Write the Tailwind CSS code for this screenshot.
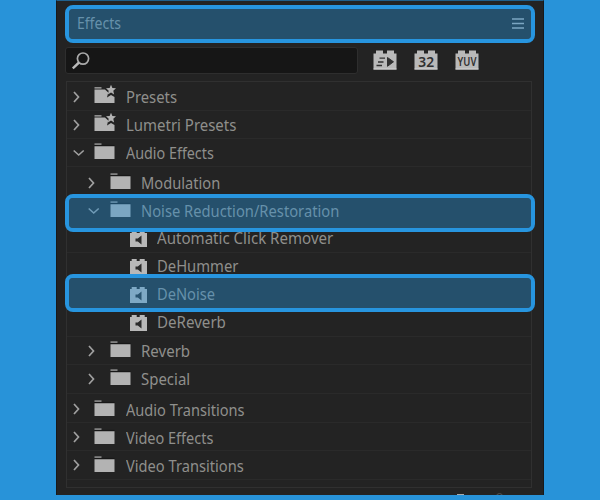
<!DOCTYPE html>
<html lang="en">
<head>
<meta charset="utf-8">
<title>Effects</title>
<script src="https://cdn.jsdelivr.net/npm/@tailwindcss/browser@4"></script>
</head>
<body class="w-[600px] h-[500px] overflow-hidden bg-[#2893d9] font-['Noto_Sans',sans-serif] text-[15.5px] leading-[28px] text-[#8f8f8c]">
<svg class="hidden">
  <symbol id="right" viewBox="0 0 12 28"><path d="M1 9l4.500 5L1 19" fill="none" stroke="#a0a0a0" stroke-width="1.700"/></symbol>
  <symbol id="down" viewBox="0 0 12 28"><path d="M.7 11.500l5 4.500 5-4.500" fill="none" stroke="#a0a0a0" stroke-width="1.600"/></symbol>
  <symbol id="folder" viewBox="0 0 21 28"><path d="M.5 4.600h7v1.200h-7zM.5 7.200h20v12.800h-20z" fill="#b3b3b3"/><path d="M.5 6.400h20" stroke="#171717"/></symbol>
  <symbol id="star" viewBox="0 0 23 28"><path d="M.5 4.300h7v1.200h-7zM.5 6.600h10.500l3.200 2.900-1.200 5 4-2.400 3.500 2V20H.5z" fill="#b3b3b3"/><path d="M17 1.800l1.400 3.200 3.600.3-2.700 2.500.8 3.600-3.100-1.900-3.100 1.900.8-3.600L12 5.300l3.600-.3z" fill="#b3b3b3"/></symbol>
  <symbol id="brick" viewBox="0 0 17 28"><path d="M0 9h1.700V7h5v2h3V7h5v2H17v14H0z" fill="#b8b8b8"/><path d="M5.500 14.400h2.300l3.700-3v9l-3.700-3H5.500z" fill="#2b2b2b"/></symbol>
  <symbol id="block" viewBox="0 0 24 20"><path d="M.5 3.500H3V.5h7v3h4V.5h7v3h2.500v16H.5z" fill="#b9b9b9"/><path d="M.5 19h23" stroke="#d4d4d4"/></symbol>
</svg>
<main class="relative ml-[56px] w-[488px] h-[495px] bg-[#232323] border-t border-t-[#20618d] border-x border-x-[#17191b] overflow-hidden">
  <header class="flex items-center justify-between h-[46px] pl-5 pr-[19px] pb-[2px]">
    <span class="origin-left scale-x-[.88] text-[16px]">Effects</span>
    <svg class="w-[12px] h-[11px] mt-[1px]" viewBox="0 0 12 11"><path d="M0 1h12M0 5.500h12M0 10h12" stroke="#b3b3b3" stroke-width="1.300"/></svg>
  </header>
  <section class="flex items-start ml-2 h-[34px]">
    <div class="w-[293px] h-[27px] rounded-[3px] border border-[#2e2e2e] bg-[#161616]">
      <svg class="w-[22px] h-[25px] ml-1.5" viewBox="0 0 22 25"><circle cx="11" cy="10.600" r="5.600" fill="none" stroke="#aaa" stroke-width="1.700"/><path d="M7 14.500L.8 20.300" stroke="#bbb" stroke-width="2.400"/></svg>
    </div>
    <div class="flex gap-[17px] ml-[15px] mt-[3px]">
      <svg class="w-[24px] h-[20px]" viewBox="0 0 24 20"><use href="#block"/><path d="M14.500 7.500l6 4.300-6 4.500z" fill="#303030" stroke="#303030"/><path d="M6.500 8.200h5.500M5 12h5.500M3.500 15.500H9" stroke="#303030" stroke-width="1.300"/></svg>
      <svg class="w-[24px] h-[20px]" viewBox="0 0 24 20"><use href="#block"/><text x="4.300" y="16.500" font-family="Noto Sans" font-weight="600" font-size="13.500" fill="#303030" textLength="15.800" lengthAdjust="spacingAndGlyphs">32</text></svg>
      <svg class="w-[24px] h-[20px]" viewBox="0 0 24 20"><use href="#block"/><text x="2.600" y="16.300" font-family="Noto Sans" font-weight="600" font-size="12" fill="#303030" textLength="18.800" lengthAdjust="spacingAndGlyphs">YUV</text></svg>
    </div>
  </section>
  <section class="ml-[9px] w-[466px] h-[407px] border border-[#303030] pt-[1px] whitespace-nowrap">
    <div class="flex h-[28px] pl-[6px] border-b border-[#2a2a2a]"><svg class="w-[12px] h-[28px] shrink-0"><use href="#right"/></svg><svg class="w-[23px] h-[28px] shrink-0 ml-[9px] mr-[9px]"><use href="#star"/></svg><span class="origin-left scale-x-[.955]">Presets</span></div>
    <div class="flex h-[28px] pl-[6px] border-b border-[#2a2a2a]"><svg class="w-[12px] h-[28px] shrink-0"><use href="#right"/></svg><svg class="w-[23px] h-[28px] shrink-0 ml-[9px] mr-[9px]"><use href="#star"/></svg><span class="origin-left scale-x-[.965]">Lumetri Presets</span></div>
    <div class="flex h-[28px] pl-[6px] border-b border-[#2a2a2a]"><svg class="w-[12px] h-[28px] shrink-0"><use href="#down"/></svg><svg class="w-[21px] h-[28px] shrink-0 ml-[9px] mr-[11px]"><use href="#folder"/></svg><span class="origin-left scale-x-[.925]">Audio Effects</span></div>
    <div class="flex h-[28px] mt-[2px] pl-[21px]"><svg class="w-[12px] h-[28px] shrink-0"><use href="#right"/></svg><svg class="w-[21px] h-[28px] shrink-0 ml-[10px] mr-[10px]"><use href="#folder"/></svg><span class="origin-left scale-x-[.945]">Modulation</span></div>
    <div class="flex h-[27px] pl-[21px]"><svg class="w-[12px] h-[28px] shrink-0"><use href="#down"/></svg><svg class="w-[21px] h-[28px] shrink-0 ml-[10px] mr-[10px]"><use href="#folder"/></svg><span class="origin-left scale-x-[.95]">Noise Reduction/Restoration</span></div>
    <div class="flex h-[29px] -mb-[1px] pl-[63px] border-b border-[#2a2a2a]"><svg class="w-[17px] h-[28px] shrink-0 mr-[10px]"><use href="#brick"/></svg><span class="origin-left scale-x-[.973]">Automatic Click Remover</span></div>
    <div class="flex h-[28px] pl-[63px]"><svg class="w-[17px] h-[28px] shrink-0 mr-[10px]"><use href="#brick"/></svg><span class="origin-left scale-x-[.955]">DeHummer</span></div>
    <div class="flex h-[28px] pl-[63px]"><svg class="w-[17px] h-[28px] shrink-0 mr-[10px]"><use href="#brick"/></svg><span class="origin-left scale-x-[.945]">DeNoise</span></div>
    <div class="flex h-[29px] pl-[63px] border-b border-[#2a2a2a]"><svg class="w-[17px] h-[28px] shrink-0 mr-[10px]"><use href="#brick"/></svg><span class="origin-left scale-x-[.975]">DeReverb</span></div>
    <div class="flex h-[28px] pl-[21px] border-b border-[#2a2a2a]"><svg class="w-[12px] h-[28px] shrink-0"><use href="#right"/></svg><svg class="w-[21px] h-[28px] shrink-0 ml-[10px] mr-[10px]"><use href="#folder"/></svg><span class="origin-left scale-x-[.97]">Reverb</span></div>
    <div class="flex h-[29px] mb-[1px] pl-[21px] border-b border-[#2a2a2a]"><svg class="w-[12px] h-[28px] shrink-0"><use href="#right"/></svg><svg class="w-[21px] h-[28px] shrink-0 ml-[10px] mr-[10px]"><use href="#folder"/></svg><span class="origin-left scale-x-[.965]">Special</span></div>
    <div class="flex h-[28px] pl-[6px] border-b border-[#2a2a2a]"><svg class="w-[12px] h-[28px] shrink-0"><use href="#right"/></svg><svg class="w-[21px] h-[28px] shrink-0 ml-[9px] mr-[11px] mt-px"><use href="#folder"/></svg><span class="mt-px origin-left scale-x-[.94]">Audio Transitions</span></div>
    <div class="flex h-[28px] pl-[6px] border-b border-[#2a2a2a]"><svg class="w-[12px] h-[28px] shrink-0"><use href="#right"/></svg><svg class="w-[21px] h-[28px] shrink-0 ml-[9px] mr-[11px] mt-px"><use href="#folder"/></svg><span class="mt-px origin-left scale-x-[.935]">Video Effects</span></div>
    <div class="flex h-[29px] pl-[6px] border-b border-[#2a2a2a]"><svg class="w-[12px] h-[28px] shrink-0"><use href="#right"/></svg><svg class="w-[21px] h-[28px] shrink-0 ml-[9px] mr-[11px] mt-px"><use href="#folder"/></svg><span class="mt-px origin-left scale-x-[.945]">Video Transitions</span></div>
  </section>
  <footer class="flex items-start h-[8px] pl-[400px] pt-[5px] gap-[32px]"><i class="block w-[7px] h-[2px] mt-[1px] bg-[#aaa]"></i><i class="block w-[7px] h-[7px] rounded-full border border-[#555]"></i></footer>

  <!-- highlights drawn over the panel -->
  <div class="absolute left-[8px] top-[4px] w-[470px] h-[38px] rounded-[8px] border-4 border-[#2795df] bg-[#2893d9]/40 bg-clip-padding"></div>
  <div class="absolute left-[8px] top-[193px] w-[470px] h-[38px] rounded-[8px] border-4 border-[#2795df] bg-[#2893d9]/40 bg-clip-padding"></div>
  <div class="absolute left-[8px] top-[273px] w-[470px] h-[38px] rounded-[8px] border-4 border-[#2795df] bg-[#2893d9]/40 bg-clip-padding"></div>
</main>
</body>
</html>
